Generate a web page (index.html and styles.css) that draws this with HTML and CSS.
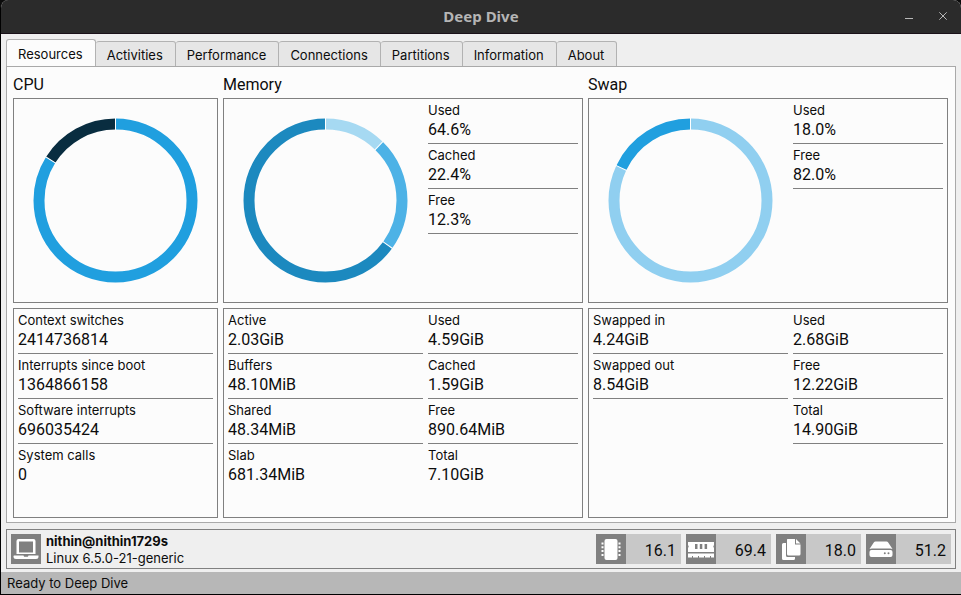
FILE: index.html
```html
<!DOCTYPE html>
<html lang="en">
<head>
<meta charset="utf-8">
<title>Deep Dive</title>
<link rel="stylesheet" href="styles.css">
</head>
<body>
<div class="window">
  <header class="titlebar">
    <h1 class="title">Deep Dive</h1>
    <div class="window-buttons">
      <button class="window-button" type="button" aria-label="Minimize"><svg width="10" height="10" viewBox="0 0 10 10"><path d="M1 7.5h8"/></svg></button>
      <button class="window-button" type="button" aria-label="Close"><svg width="10" height="10" viewBox="0 0 10 10"><path d="M1.3 1.3l7.4 7.4M8.7 1.3l-7.4 7.4"/></svg></button>
    </div>
  </header>

  <main class="content">
    <div class="tabs" role="tablist">
      <button class="tab tab-active" role="tab" aria-selected="true" type="button">Resources</button>
      <button class="tab" role="tab" type="button">Activities</button>
      <button class="tab" role="tab" type="button">Performance</button>
      <button class="tab" role="tab" type="button">Connections</button>
      <button class="tab" role="tab" type="button">Partitions</button>
      <button class="tab" role="tab" type="button">Information</button>
      <button class="tab" role="tab" type="button">About</button>
    </div>

    <div class="pane" role="tabpanel">
      <section class="resource">
        <h2 class="heading">CPU</h2>
        <div class="card">
          <svg class="donut" viewBox="0 0 195 195">
            <circle class="arc blue" cx="97.5" cy="97.5" r="76.5" pathLength="100" stroke-dasharray="83.9 100"/>
            <circle class="arc navy" cx="97.5" cy="97.5" r="76.5" pathLength="100" stroke-dasharray="16.1 100" stroke-dashoffset="-83.9"/>
            <path class="divider" d="M97.5 15v12"/>
            <path class="divider" d="M97.5 15v12" transform="rotate(302 97.5 97.5)"/>
          </svg>
        </div>
        <div class="card card-details">
          <dl class="stats stats-open">
            <div class="stat"><dt>Context switches</dt><dd>2414736814</dd></div>
            <div class="stat"><dt>Interrupts since boot</dt><dd>1364866158</dd></div>
            <div class="stat"><dt>Software interrupts</dt><dd>696035424</dd></div>
            <div class="stat"><dt>System calls</dt><dd>0</dd></div>
          </dl>
        </div>
      </section>

      <section class="resource">
        <h2 class="heading">Memory</h2>
        <div class="card card-split">
          <svg class="donut" viewBox="0 0 195 195">
            <circle class="arc pale" cx="97.5" cy="97.5" r="76.5" pathLength="100" stroke-dasharray="12.3 100"/>
            <circle class="arc sky" cx="97.5" cy="97.5" r="76.5" pathLength="100" stroke-dasharray="22.6 100" stroke-dashoffset="-12.3"/>
            <circle class="arc deep" cx="97.5" cy="97.5" r="76.5" pathLength="100" stroke-dasharray="65.1 100" stroke-dashoffset="-34.9"/>
            <path class="divider" d="M97.5 15v12"/>
            <path class="divider" d="M97.5 15v12" transform="rotate(44.3 97.5 97.5)"/>
            <path class="divider" d="M97.5 15v12" transform="rotate(125.6 97.5 97.5)"/>
          </svg>
          <dl class="stats">
            <div class="stat"><dt>Used</dt><dd>64.6%</dd></div>
            <div class="stat"><dt>Cached</dt><dd>22.4%</dd></div>
            <div class="stat"><dt>Free</dt><dd>12.3%</dd></div>
          </dl>
        </div>
        <div class="card card-split card-details">
          <dl class="stats stats-open">
            <div class="stat"><dt>Active</dt><dd>2.03GiB</dd></div>
            <div class="stat"><dt>Buffers</dt><dd>48.10MiB</dd></div>
            <div class="stat"><dt>Shared</dt><dd>48.34MiB</dd></div>
            <div class="stat"><dt>Slab</dt><dd>681.34MiB</dd></div>
          </dl>
          <dl class="stats stats-open">
            <div class="stat"><dt>Used</dt><dd>4.59GiB</dd></div>
            <div class="stat"><dt>Cached</dt><dd>1.59GiB</dd></div>
            <div class="stat"><dt>Free</dt><dd>890.64MiB</dd></div>
            <div class="stat"><dt>Total</dt><dd>7.10GiB</dd></div>
          </dl>
        </div>
      </section>

      <section class="resource">
        <h2 class="heading">Swap</h2>
        <div class="card card-split">
          <svg class="donut" viewBox="0 0 195 195">
            <circle class="arc light" cx="97.5" cy="97.5" r="76.5" pathLength="100" stroke-dasharray="82 100"/>
            <circle class="arc blue" cx="97.5" cy="97.5" r="76.5" pathLength="100" stroke-dasharray="18 100" stroke-dashoffset="-82"/>
            <path class="divider" d="M97.5 15v12"/>
            <path class="divider" d="M97.5 15v12" transform="rotate(295.2 97.5 97.5)"/>
          </svg>
          <dl class="stats">
            <div class="stat"><dt>Used</dt><dd>18.0%</dd></div>
            <div class="stat"><dt>Free</dt><dd>82.0%</dd></div>
          </dl>
        </div>
        <div class="card card-split card-details">
          <dl class="stats">
            <div class="stat"><dt>Swapped in</dt><dd>4.24GiB</dd></div>
            <div class="stat"><dt>Swapped out</dt><dd>8.54GiB</dd></div>
          </dl>
          <dl class="stats">
            <div class="stat"><dt>Used</dt><dd>2.68GiB</dd></div>
            <div class="stat"><dt>Free</dt><dd>12.22GiB</dd></div>
            <div class="stat"><dt>Total</dt><dd>14.90GiB</dd></div>
          </dl>
        </div>
      </section>
    </div>

    <div class="summary">
      <span class="icon"><svg width="30" height="30" viewBox="0 0 30 30"><path fill-rule="evenodd" d="M7.5 5h15a2 2 0 0 1 2 2v13h-19V7a2 2 0 0 1 2-2zM8 7.5v11h14v-11z"/><path d="M3 21.5h9.5c.3 1 .6 1.2 1.2 1.2h2.6c.6 0 .9-.2 1.2-1.2H27.5v1a2.5 2.5 0 0 1-2.5 2.500H5a2.5 2.5 0 0 1-2.5-2.500v-.5z"/></svg></span>
      <div class="host">
        <strong>nithin@nithin1729s</strong>
        <span>Linux 6.5.0-21-generic</span>
      </div>
      <div class="meters">
        <div class="meter">
          <span class="icon"><svg width="30" height="30" viewBox="0 0 30 30"><rect x="8.500" y="5" width="13" height="21" rx="2"/><path d="M5.500 8.500h2v2h-2zm0 3.800h2v2h-2zm0 3.800h2v2h-2zm0 3.800h2v2h-2zM22.500 8.500h2v2h-2zm0 3.800h2v2h-2zm0 3.800h2v2h-2zm0 3.800h2v2h-2z"/></svg></span>
          <span class="reading">16.1</span>
        </div>
        <div class="meter">
          <span class="icon"><svg width="30" height="30" viewBox="0 0 30 30"><path fill-rule="evenodd" d="M2 8h26v3q-1.500 1.500 0 3v4H2v-4q1.500-1.500 0-3zM9 10v5h2.500v-5zm4.800 0v5h2.500v-5zm4.800 0v5h2.500v-5z"/><path d="M2 19.500h26V23.500h-3v-1.500h-1v1.500h-5v-1.500h-1v1.500h-5v-1.500h-1v1.500H7v-1.500H6v1.500H2z"/></svg></span>
          <span class="reading">69.4</span>
        </div>
        <div class="meter">
          <span class="icon"><svg width="30" height="30" viewBox="0 0 30 30"><path d="M11.500 5H19v5.500h5.500V20a1.500 1.500 0 0 1-1.500 1.500H12.500A1.500 1.500 0 0 1 11 20V5.500zM20 5l4.500 4.500H20z"/><path d="M7.500 9H10v12.500a1.500 1.500 0 0 0 1.500 1.500H19v1.500a1.500 1.500 0 0 1-1.500 1.500h-10A1.500 1.500 0 0 1 6 24.500v-14A1.500 1.500 0 0 1 7.500 9z"/></svg></span>
          <span class="reading">18.0</span>
        </div>
        <div class="meter">
          <span class="icon"><svg width="30" height="30" viewBox="0 0 30 30"><path d="M9.500 7.500h11q1 0 1.700.9L26.500 15Q25.500 14.500 24 14.500H6q-1.500 0-2.500.5l4.300-6.600q.7-.9 1.700-.9z"/><path fill-rule="evenodd" d="M5.500 16h19a2 2 0 0 1 2 2v3a2 2 0 0 1-2 2h-19a2 2 0 0 1-2-2v-3a2 2 0 0 1 2-2zM18.800 18.200a1 1 0 1 0 0 2 1 1 0 0 0 0-2zM22.500 18.200a1 1 0 1 0 0 2 1 1 0 0 0 0-2z"/></svg></span>
          <span class="reading">51.2</span>
        </div>
      </div>
    </div>
  </main>

  <footer class="statusbar">Ready to Deep Dive</footer>
</div>
</body>
</html>
```
FILE: styles.css
```css
* {
  box-sizing: border-box;
}

body {
  margin: 0;
  background: #0b0b0b;
  color: #0c0c0c;
  font: 13px/16px Inter, sans-serif;
}

h1, h2, dl, dd {
  margin: 0;
}

.window {
  display: flex;
  flex-direction: column;
  min-height: 100vh;
  border: solid #000;
  border-width: 0 0 1px 1px;
  border-radius: 8px 8px 0 0;
  background: #efefef;
  overflow: hidden;
}

.titlebar {
  display: grid;
  grid-template-columns: 1fr auto 1fr;
  align-items: center;
  height: 34px;
  padding: 0 13px 2px;
  border-bottom: 1px solid #1a1119;
  background: #2b2b2b;
}

.title {
  grid-column: 2;
  color: #b5b5b5;
  font: bold 15px/20px "Noto Sans", sans-serif;
}

.window-buttons {
  display: flex;
  justify-content: flex-end;
  gap: 24px;
}

.window-button {
  width: 10px;
  height: 10px;
  padding: 0;
  border: 0;
  background: none;
}

.window-button svg {
  display: block;
  fill: none;
  stroke: #b8b8b8;
}

.content {
  display: flex;
  flex: 1;
  flex-direction: column;
  padding: 5px 5px 3px;
}

.tabs {
  display: flex;
  align-items: flex-end;
  height: 28px;
  margin-bottom: -1px;
}

.tab {
  height: 26px;
  padding: 2px 12px 0 11px;
  border: 1px solid #b2b2b2;
  border-left: 0;
  border-radius: 3px 3px 0 0;
  background: #e6e6e6;
  color: inherit;
  font: inherit;
}

.tab-active {
  height: 28px;
  padding-top: 0;
  border: 1px solid #b2b2b2;
  border-bottom: 0;
  background: #fcfcfc;
}

.pane {
  display: grid;
  flex: 1;
  grid-template-columns: 205px 1fr 1fr;
  gap: 5px;
  padding: 6px 7px 4px 6px;
  border: 1px solid #a9a9a9;
  background: #fcfcfc;
}

.resource {
  display: flex;
  flex-direction: column;
  gap: 5px;
}

.heading {
  height: 20px;
  font: 16px/24px Roboto, sans-serif;
}

.card {
  height: 205px;
  padding: 4px;
  border: 1px solid #808080;
}

.card-split {
  display: grid;
  grid-template-columns: 195px 1fr;
  gap: 5px;
}

.card-details {
  flex: 1 0 210px;
}

.donut {
  display: block;
  width: 195px;
  height: 195px;
}

.arc {
  fill: none;
  stroke-width: 11;
  transform: rotate(-90deg);
  transform-origin: center;
}

.blue { stroke: #209fdf; }
.navy { stroke: #092d40; }
.pale { stroke: #a6d9f2; }
.sky { stroke: #4db2e6; }
.deep { stroke: #1c89bf; }
.light { stroke: #90cff0; }

.divider {
  stroke: #fff;
}

.stats {
  display: flex;
  flex-direction: column;
  gap: 4px;
}

.stat {
  height: 41px;
  border-bottom: 1px solid #808080;
}

.stats-open .stat:last-child {
  border-bottom: 0;
}

.stat dt {
  padding-bottom: 2px;
  line-height: 14px;
}

.stat dd {
  font: 16px/21px Roboto, sans-serif;
}

.summary {
  display: flex;
  align-items: center;
  gap: 5px;
  height: 40px;
  margin-top: 6px;
  padding: 4px;
  border: 1px solid #808080;
}

.icon {
  width: 30px;
  height: 30px;
  background: #808080;
}

.icon svg {
  display: block;
  fill: #fff;
}

.host {
  display: grid;
  padding-top: 2px;
  line-height: 17px;
}

.meters {
  display: flex;
  gap: 5px;
  margin-left: auto;
}

.meter {
  display: flex;
  width: 85px;
  height: 30px;
  background: #c8c8c8;
}

.reading {
  flex: 1;
  padding-right: 5px;
  font: 16px/34px Roboto, sans-serif;
  text-align: right;
}

.statusbar {
  height: 22px;
  padding: 0 6px;
  background: #b7b7b7;
  line-height: 22px;
}
```
